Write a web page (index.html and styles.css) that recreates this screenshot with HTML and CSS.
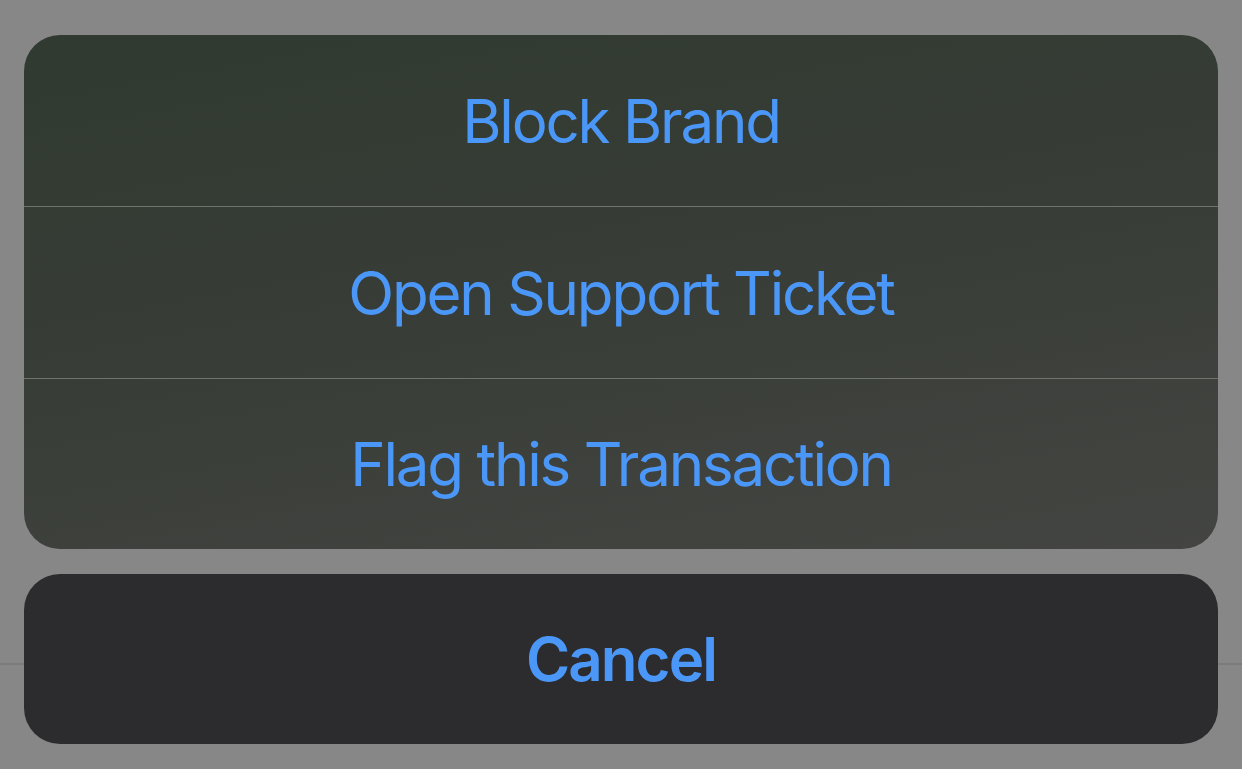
FILE: index.html
```html
<!DOCTYPE html>
<html>
<head>
<meta charset="utf-8">
<link rel="stylesheet" href="styles.css">
</head>
<body>
<div class="backdrop">
  <div class="bg-line"></div>
  <div class="sheet">
    <div class="group">
      <div class="action">Block Brand</div>
      <div class="action divided">Open Support Ticket</div>
      <div class="action divided">Flag this Transaction</div>
    </div>
    <div class="cancel">Cancel</div>
  </div>
</div>
</body>
</html>
```

FILE: styles.css
```css
html, body {
  margin: 0;
  padding: 0;
}
body {
  width: 1242px;
  height: 769px;
  overflow: hidden;
  background: #878787;
  font-family: Inter, "Noto Sans", sans-serif;
}
.backdrop {
  position: relative;
  width: 1242px;
  height: 769px;
}
.bg-line {
  position: absolute;
  left: 0;
  right: 0;
  top: 663px;
  height: 2px;
  background: #7b7b7b;
}
.sheet {
  position: relative;
  padding: 35px 24px 0 24px;
  display: flex;
  flex-direction: column;
  gap: 25px;
}
.group {
  display: flex;
  flex-direction: column;
  border-radius: 36px;
  overflow: hidden;
  background: linear-gradient(170deg, #303a30 0%, #383d37 50%, #444542 100%);
}
.action {
  height: 171px;
  box-sizing: border-box;
  display: flex;
  align-items: center;
  justify-content: center;
  color: #4b97f8;
  font-size: 60px;
  font-weight: 400;
  letter-spacing: -2.2px;
}
.action.divided {
  height: 172px;
  border-top: 1px solid #6f746d;
}
.action.divided:last-child {
  height: 171px;
}
.cancel {
  height: 170px;
  border-radius: 36px;
  background: #2c2c2e;
  display: flex;
  align-items: center;
  justify-content: center;
  color: #4b97f8;
  font-size: 60px;
  font-weight: 600;
  letter-spacing: -1.9px;
}
```
